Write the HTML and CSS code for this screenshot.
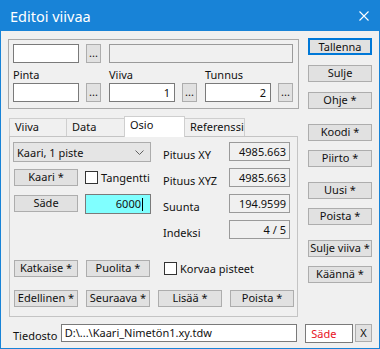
FILE: index.html
```html
<!DOCTYPE html>
<html lang="fi">
<head>
    <meta charset="UTF-8" />
    <title>Editoi viivaa</title>
    <link rel="stylesheet" href="styles.css">
</head>
<body>
    <div class="window">
        <!-- Title bar -->
        <div class="titlebar">
            <span class="title">Editoi viivaa</span>
            <svg class="close" width="10" height="10" viewBox="0 0 10 10">
                <path d="M0.5 0.5 L9.5 9.5 M9.5 0.5 L0.5 9.5" stroke="#fff" stroke-width="1.1" fill="none" />
            </svg>
        </div>

        <div class="body">
            <div class="main">
                <div class="left">
                    <!-- Top fields -->
                    <div class="groupbox">
                        <div class="tb"></div>
                        <div class="pick">...</div>
                        <div class="tb ro wide"></div>

                        <div class="lbl first">Pinta</div>
                        <div></div>
                        <div class="lbl">Viiva</div>
                        <div></div>
                        <div class="lbl">Tunnus</div>
                        <div></div>

                        <div class="tb"></div>
                        <div class="pick">...</div>
                        <div class="tb num">1</div>
                        <div class="pick">...</div>
                        <div class="tb num">2</div>
                        <div class="pick">...</div>
                    </div>

                    <!-- Tabs -->
                    <div class="tab-strip">
                        <div class="tab tab-viiva">Viiva</div>
                        <div class="tab tab-data">Data</div>
                        <div class="tab tab-osio active">Osio</div>
                        <div class="tab tab-ref">Referenssi</div>
                    </div>
                    <div class="tab-panel">
                        <div class="osio-top">
                            <div class="osio-left">
                                <div class="combo">
                                    <span>Kaari, 1 piste</span>
                                    <svg width="9" height="5" viewBox="0 0 9 5">
                                        <path d="M0.5 0.5 L4.5 4.5 L8.5 0.5" stroke="#606060" fill="none" />
                                    </svg>
                                </div>
                                <div class="btn small">Kaari *</div>
                                <div class="check"><span class="box"></span>Tangentti</div>
                                <div class="btn small">Säde</div>
                                <div class="tb num cyan">6000<span class="caret"></span></div>
                            </div>
                            <div class="osio-right">
                                <div class="vlbl">Pituus XY</div>
                                <div class="tb ro num">4985.663</div>
                                <div class="vlbl">Pituus XYZ</div>
                                <div class="tb ro num">4985.663</div>
                                <div class="vlbl">Suunta</div>
                                <div class="tb ro num">194.9599</div>
                                <div class="vlbl">Indeksi</div>
                                <div class="tb ro num">4 / 5</div>
                            </div>
                        </div>
                        <div class="osio-buttons">
                            <div class="btn">Katkaise *</div>
                            <div class="btn">Puolita *</div>
                            <div class="check wide-check"><span class="box"></span>Korvaa pisteet</div>
                            <div class="btn">Edellinen *</div>
                            <div class="btn">Seuraava *</div>
                            <div class="btn">Lisää *</div>
                            <div class="btn">Poista *</div>
                        </div>
                    </div>
                </div>

                <!-- Side buttons -->
                <div class="side">
                    <div class="btn default">Tallenna</div>
                    <div class="btn near">Sulje</div>
                    <div class="btn near">Ohje *</div>
                    <div class="btn group">Koodi *</div>
                    <div class="btn pair">Piirto *</div>
                    <div class="btn group">Uusi *</div>
                    <div class="btn pair">Poista *</div>
                    <div class="btn group">Sulje viiva *</div>
                    <div class="btn pair">Käännä *</div>
                </div>
            </div>

            <!-- File row -->
            <div class="file-row">
                <span class="file-lbl">Tiedosto</span>
                <div class="tb file">D:\...\Kaari_Nimetön1.xy.tdw</div>
                <div class="tb mode">Säde</div>
                <div class="btn x-btn">X</div>
            </div>
        </div>
    </div>
</body>
</html>
```

FILE: styles.css
```css
* {
    box-sizing: border-box;
    margin: 0;
    padding: 0;
}

body {
    background: #fff;
    font-family: 'Noto Sans', 'Segoe UI', sans-serif;
    font-size: 11px;
    color: #111;
}

.window {
    width: 380px;
    height: 349px;
    border: 1px solid #1883d7;
    background: #f0f0f0;
    display: flex;
    flex-direction: column;
}

/* Title bar */
.titlebar {
    height: 30px;
    flex-shrink: 0;
    background: #1883d7;
    color: #fff;
    display: flex;
    align-items: center;
    justify-content: space-between;
    padding: 0 10px 0 9px;
}

.title {
    font-size: 14.5px;
}

.body {
    padding: 0 7px;
}

.main {
    display: flex;
    gap: 9px;
}

.left {
    width: 291px;
}

/* Common controls */
.tb {
    height: 19px;
    border: 1px solid #7a7a7a;
    background: #fff;
    line-height: 17px;
    padding: 0 4px;
    white-space: nowrap;
    overflow: hidden;
}

.tb.num {
    text-align: right;
}

.tb.ro {
    background: #f0f0f0;
    border-color: #9a9a9a;
}

.btn {
    height: 17px;
    width: 64px;
    background: #e1e1e1;
    border: 1px solid #adadad;
    text-align: center;
    line-height: 14px;
    white-space: nowrap;
}

.pick {
    width: 15px;
    height: 19px;
    background: #e1e1e1;
    border: 1px solid #adadad;
    text-align: center;
    line-height: 15px;
    justify-self: end;
}

.check {
    display: flex;
    align-items: center;
    gap: 3px;
}

.check .box {
    width: 13px;
    height: 13px;
    border: 1px solid #333;
    background: #fff;
}

/* Group box */
.groupbox {
    margin-top: 8px;
    height: 70px;
    border: 1px solid #a9a9a9;
    padding: 4px 0 0 4px;
    display: grid;
    grid-template-columns: 66px 22px 74px 22px 74px 22px;
    grid-template-rows: 19px 20px 19px;
}

.groupbox .tb,
.groupbox .lbl {
    width: 66px;
    justify-self: end;
}

.groupbox .lbl {
    align-self: end;
    line-height: 13px;
    padding-bottom: 2px;
}

.groupbox .tb.wide {
    grid-column: 3 / span 4;
    width: 184px;
}

/* Tabs */
.tab-strip {
    margin-top: 7px;
    margin-left: 1px;
    height: 20px;
    display: flex;
    align-items: flex-end;
}

.tab {
    height: 18px;
    border: 1px solid #cfcfcf;
    border-bottom: none;
    padding-left: 5px;
    line-height: 16px;
}

.tab + .tab {
    margin-left: -1px;
}

.tab-viiva { width: 58px; }
.tab-data { width: 59px; }
.tab-osio { width: 61px; }
.tab-ref { width: 61px; }

.tab.active {
    height: 21px;
    margin-bottom: -1px;
    background: #fff;
    line-height: 15px;
    position: relative;
    z-index: 1;
}

.tab-panel {
    margin-left: 1px;
    width: 289px;
    height: 181px;
    border: 1px solid #c4c4c4;
    padding: 5px 3px 0 3px;
}

.osio-top {
    display: flex;
}

.osio-left {
    display: grid;
    grid-template-columns: 65px 66px;
    grid-template-rows: repeat(4, 19px);
    column-gap: 7px;
    row-gap: 7px;
}

.combo {
    grid-column: 1 / span 2;
    height: 20px;
    background: #e5e5e5;
    border: 1px solid #acacac;
    display: flex;
    align-items: center;
    justify-content: space-between;
    padding: 0 6px 0 3px;
}

.btn.small {
    margin-left: 1px;
    align-self: center;
}

.tb.cyan {
    height: 20px;
    background: #80ffff;
    padding-right: 7px;
}

.caret {
    display: inline-block;
    width: 1px;
    height: 13px;
    background: #000;
    vertical-align: -3px;
    margin-left: 1px;
}

.osio-right {
    margin-left: 12px;
    display: grid;
    grid-template-columns: 66px 61px;
    grid-template-rows: repeat(4, 19px);
    row-gap: 7px;
}

.vlbl {
    line-height: 19px;
    padding-top: 3px;
}

.osio-right .tb {
    padding-right: 3px;
}

.osio-buttons {
    margin-top: 21px;
    margin-left: 1px;
    display: grid;
    grid-template-columns: repeat(4, 64px);
    grid-auto-rows: 17px;
    column-gap: 8px;
    row-gap: 13px;
}

.wide-check {
    grid-column: 3 / span 2;
    margin-left: 6px;
}

/* Side buttons */
.side {
    padding-top: 7px;
    display: flex;
    flex-direction: column;
}

.btn.default {
    border: 2px solid #0078d7;
    line-height: 13px;
}

.btn.near { margin-top: 10px; }
.btn.group { margin-top: 15px; }
.btn.pair { margin-top: 9px; }

/* File row */
.file-row {
    margin-top: 7px;
    padding-left: 5px;
    display: flex;
    align-items: flex-start;
}

.file-lbl {
    width: 48px;
    padding-top: 5px;
    line-height: 14px;
}

.tb.file {
    width: 238px;
    height: 18px;
    line-height: 16px;
    padding-left: 3px;
}

.tb.mode {
    margin-left: 8px;
    width: 48px;
    height: 19px;
    color: #e81123;
    padding-left: 5px;
}

.btn.x-btn {
    margin-left: 2px;
    width: 17px;
    height: 18px;
    line-height: 16px;
}
```
